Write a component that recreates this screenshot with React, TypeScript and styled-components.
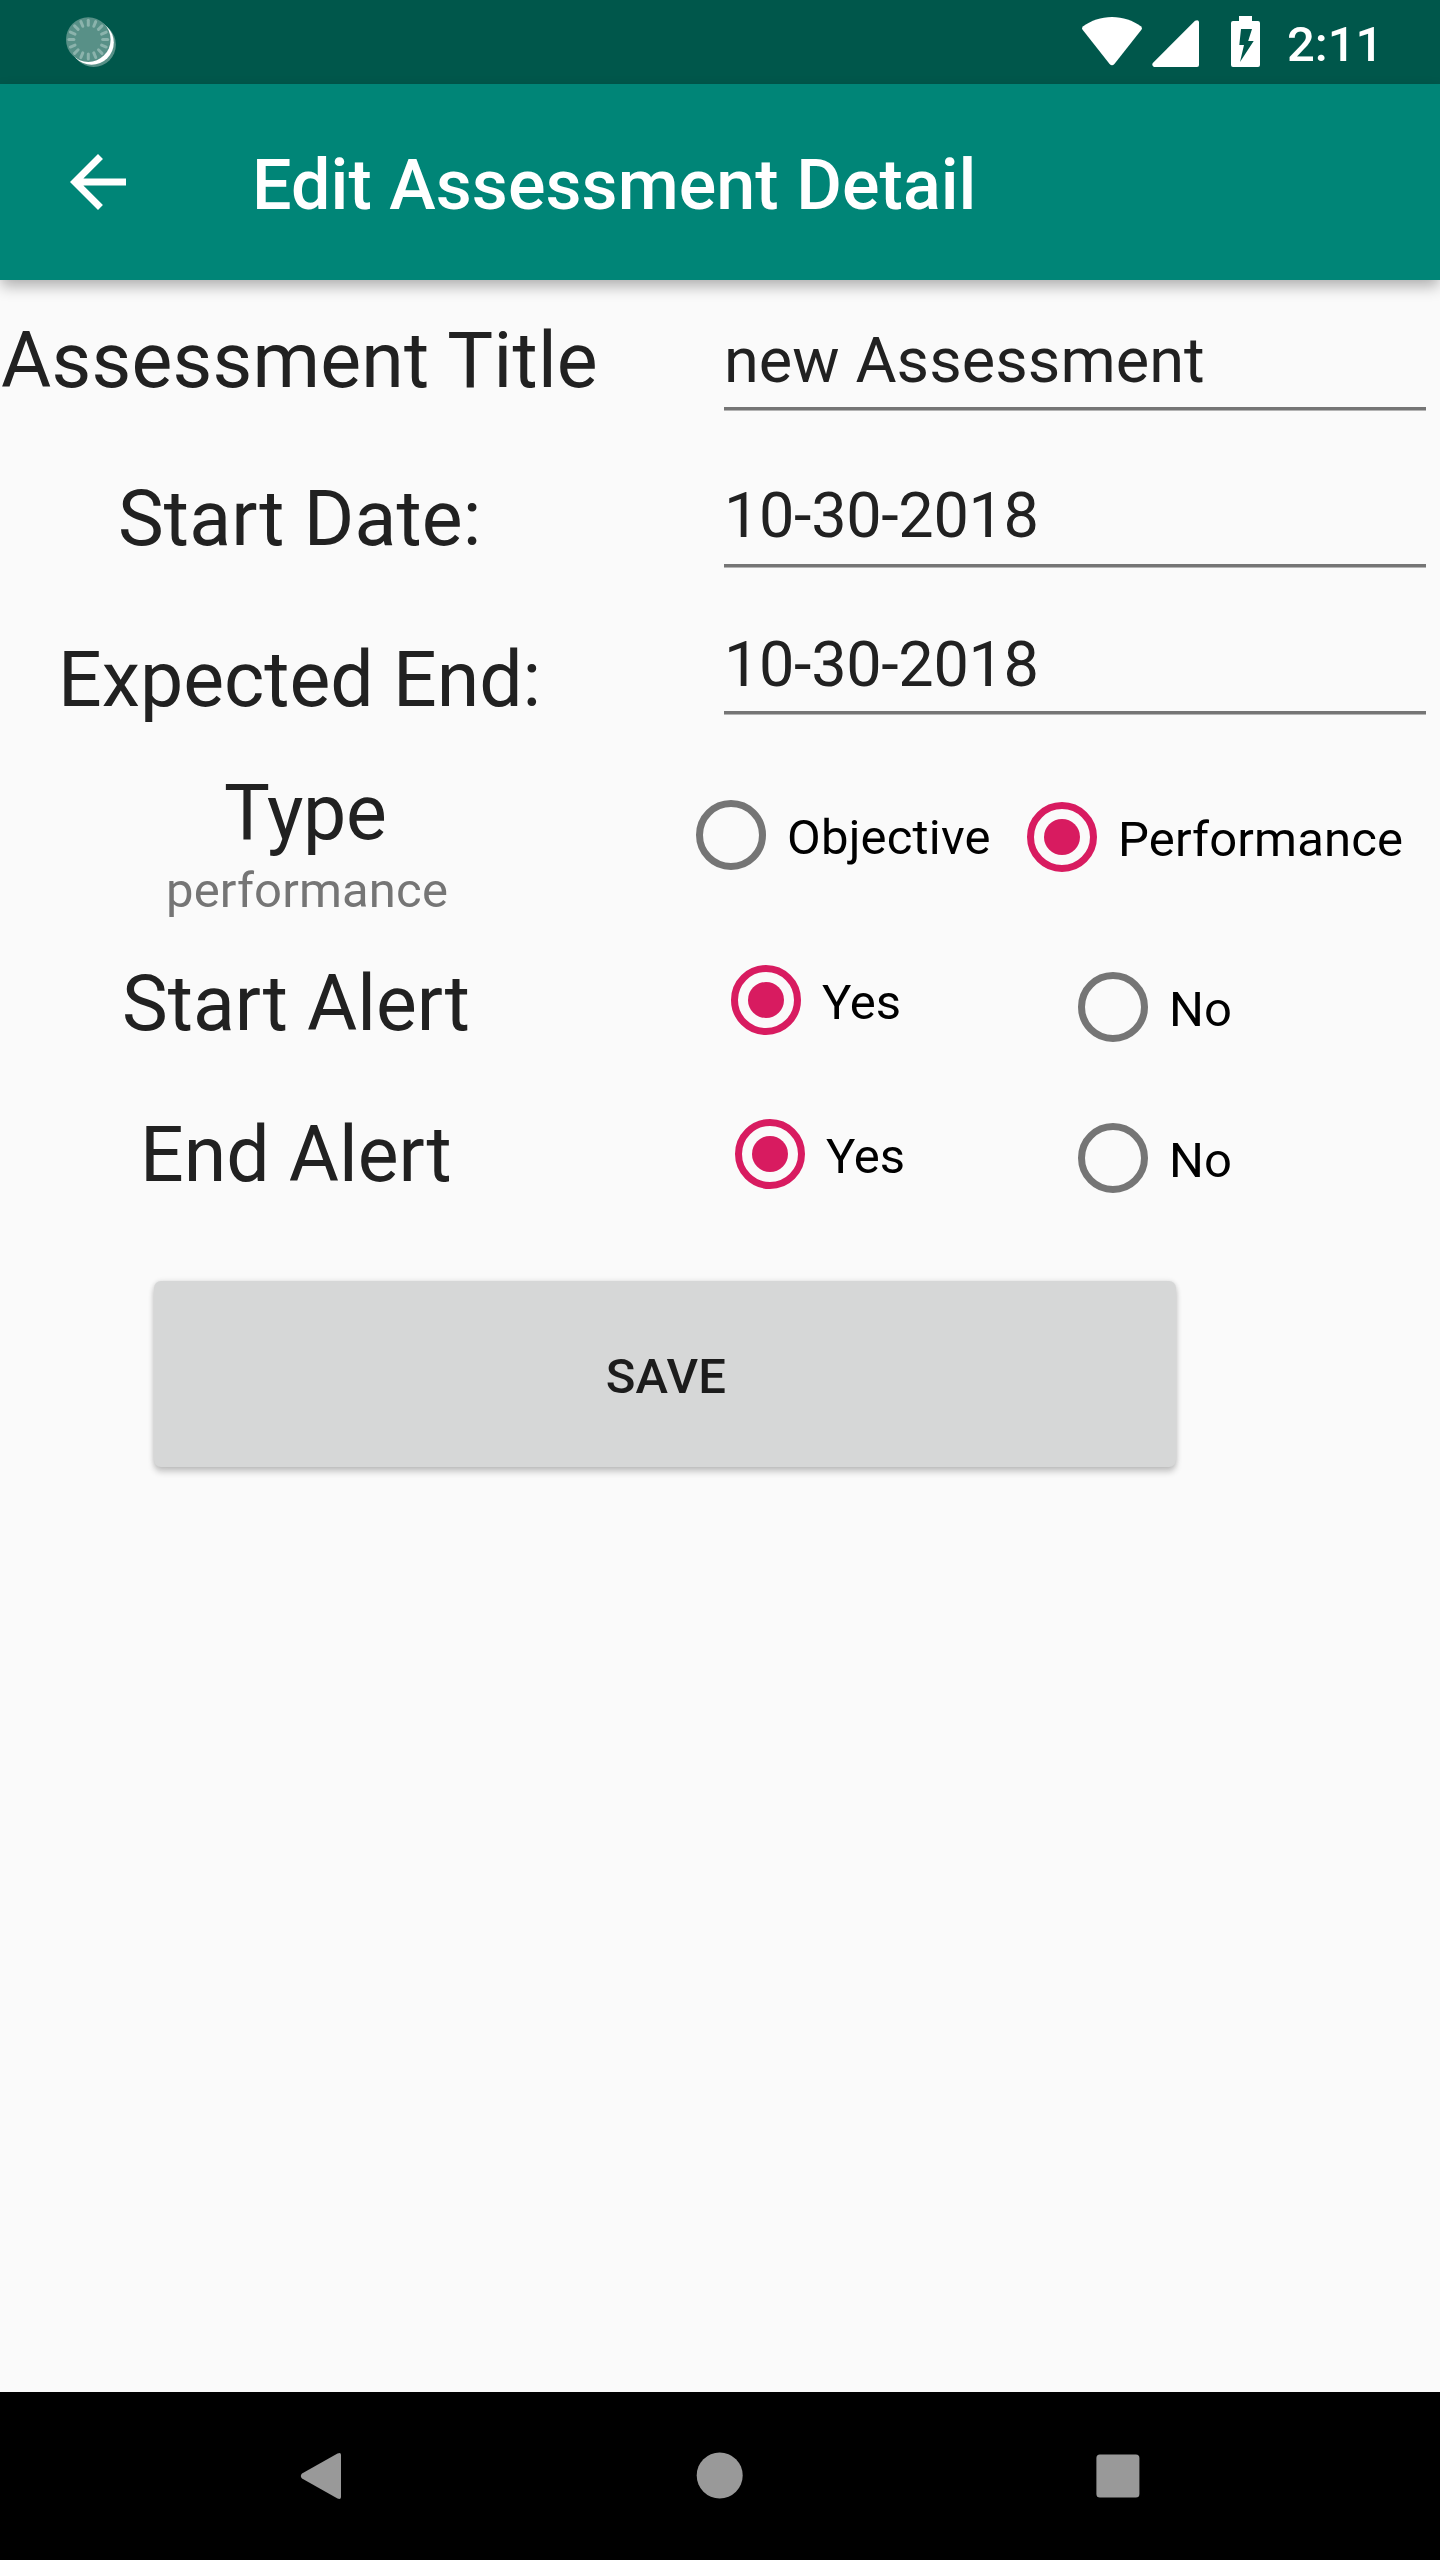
import React, { useState } from "react";
import styled, { createGlobalStyle } from "styled-components";

const GlobalStyle = createGlobalStyle`
  * { box-sizing: border-box; }
  body {
    margin: 0;
    background: #fafafa;
    font-family: Roboto, "Noto Sans", sans-serif;
  }
`;

const Screen = styled.div`
  width: 1440px;
  height: 2560px;
  display: flex;
  flex-direction: column;
  background: #fafafa;
  overflow: hidden;
`;

const StatusBar = styled.header`
  flex: none;
  height: 84px;
  padding: 16px 64px 0 66px;
  display: flex;
  align-items: flex-start;
  background: #00574b;
  color: #fff;
`;

const StatusIcon = styled.svg<{ $left?: number; $top?: number }>`
  flex: none;
  display: block;
  margin-left: ${(p) => p.$left ?? 0}px;
  margin-top: ${(p) => p.$top ?? 0}px;
`;

const StatusSpacer = styled.div`
  flex: 1;
`;

const Clock = styled.time`
  width: 90px;
  margin-left: 26px;
  padding-left: 1px;
  font-size: 49px;
  line-height: 57px;
  font-weight: 500;
  white-space: nowrap;
`;

const AppBar = styled.div`
  flex: none;
  height: 196px;
  padding-left: 56px;
  display: flex;
  align-items: center;
  background: #008577;
  color: #fff;
  box-shadow: 0 7px 14px -1px rgba(0, 0, 0, 0.31);
`;

const BackButton = styled.button`
  width: 84px;
  height: 84px;
  padding: 0;
  border: 0;
  background: none;
  color: inherit;

  svg {
    display: block;
  }
`;

const Heading = styled.h1`
  margin: 6px 0 0 112px;
  font-size: 70px;
  line-height: 82px;
  font-weight: 500;
  letter-spacing: 0.07px;
  white-space: nowrap;
`;

const Form = styled.form`
  flex: 1;
  display: flex;
  flex-direction: column;
`;

const Row = styled.div<{ $height: number }>`
  flex: none;
  height: ${(p) => p.$height}px;
  display: flex;
  align-items: flex-start;
`;

const LabelCell = styled.div<{ $top: number }>`
  flex: none;
  width: 675px;
  padding-top: ${(p) => p.$top}px;
`;

const Label = styled.div<{ $indent: number; $spacing?: number }>`
  margin-left: ${(p) => p.$indent}px;
  font-size: 77px;
  line-height: 90px;
  letter-spacing: ${(p) => p.$spacing ?? 0}px;
  color: #212121;
  white-space: nowrap;
`;

const Caption = styled.div`
  margin: 4px 0 0 166px;
  font-size: 49px;
  line-height: 57px;
  letter-spacing: 0.15px;
  color: #757575;
`;

const Field = styled.div<{ $top: number; $spacing: number }>`
  width: 702px;
  margin: ${(p) => p.$top}px 0 0 49px;
  font-size: 63px;
  line-height: 73px;
  letter-spacing: ${(p) => p.$spacing}px;
  color: #212121;
  white-space: nowrap;
`;

const Underline = styled.div<{ $gap: number }>`
  height: 4px;
  margin-top: ${(p) => p.$gap}px;
  background: linear-gradient(#757575 3px, #b4b4b4 3px);
`;

const Option = styled.label<{ $left: number; $top: number }>`
  display: flex;
  align-items: flex-start;
  flex: none;
  width: 347px;
  margin: ${(p) => p.$top}px 0 0 ${(p) => p.$left}px;
  gap: 21px;
  color: #000;
`;

const Ring = styled.span<{ $checked: boolean }>`
  flex: none;
  width: 70px;
  height: 70px;
  display: grid;
  place-items: center;
  border: 7px solid ${(p) => (p.$checked ? "#d81b60" : "#757575")};
  border-radius: 50%;

  &::after {
    content: "";
    width: 36px;
    height: 36px;
    border-radius: 50%;
    background: ${(p) => (p.$checked ? "#d81b60" : "transparent")};
  }
`;

const OptionText = styled.span<{ $spacing: number }>`
  padding-top: 9px;
  font-size: 49px;
  line-height: 57px;
  letter-spacing: ${(p) => p.$spacing}px;
  white-space: nowrap;
`;

const SaveButton = styled.button`
  flex: none;
  width: 1022px;
  height: 186px;
  margin-left: 154px;
  padding: 4px 0 0 2px;
  border: 0;
  border-radius: 7px;
  background: #d6d7d7;
  color: #1c1c1c;
  font-family: inherit;
  font-size: 49px;
  line-height: 57px;
  font-weight: 500;
  letter-spacing: 0.3px;
  box-shadow: 0 5px 6px rgba(0, 0, 0, 0.2), 0 0 5px rgba(0, 0, 0, 0.12);
`;

const NavBar = styled.nav`
  flex: none;
  height: 168px;
  display: flex;
  align-items: flex-start;
  padding: 60px 300px 0;
  justify-content: space-between;
  background: #000;
`;

const ticks = Array.from({ length: 16 }, (_, i) => i * 22.5);

function Choice(props: {
  text: string;
  left: number;
  top: number;
  spacing?: number;
  checked: boolean;
  onPick: () => void;
}) {
  return (
    <Option $left={props.left} $top={props.top} onClick={props.onPick}>
      <Ring $checked={props.checked} />
      <OptionText $spacing={props.spacing ?? 0}>{props.text}</OptionText>
    </Option>
  );
}

function TextField(props: { value: string; top: number; gap: number; spacing: number }) {
  return (
    <Field $top={props.top} $spacing={props.spacing}>
      {props.value}
      <Underline $gap={props.gap} />
    </Field>
  );
}

export default function App() {
  const [type, setType] = useState("performance");
  const [startAlert, setStartAlert] = useState(true);
  const [endAlert, setEndAlert] = useState(true);

  return (
    <>
      <GlobalStyle />
      <Screen>
        <StatusBar>
          <StatusIcon width="50" height="52" viewBox="66 16 50 52">
            <circle cx="93.7" cy="44.8" r="22.2" fill="#589087" />
            <circle cx="91.6" cy="42.6" r="22.2" fill="#fff" />
            <circle cx="88.3" cy="39.6" r="22.3" fill="#589087" />
            {ticks.map((angle) => (
              <path
                key={angle}
                d="M88.3 20.2v5"
                stroke="#8bb3ac"
                strokeWidth="3"
                strokeLinecap="round"
                transform={`rotate(${angle} 88.3 39.6)`}
              />
            ))}
          </StatusIcon>
          <StatusSpacer />
          <StatusIcon width="60" height="49" viewBox="0 0 60 49" $top={1}>
            <path
              d="M30 0C19 0 9 3.600 1.200 9.200Q-.8 10.800 .8 13L27.600 47Q30 49.600 32.400 47L59.200 13Q60.800 10.800 58.800 9.200C51 3.600 41 0 30 0z"
              fill="#fff"
            />
          </StatusIcon>
          <StatusIcon width="47" height="47" viewBox="0 0 47 47" $left={10} $top={4}>
            <path
              d="M43 .8L.8 43Q-.6 45.600 2 47H45Q47 47 47 45V2Q46.600-.8 43 .8z"
              fill="#fff"
            />
          </StatusIcon>
          <StatusIcon width="29" height="51" viewBox="0 0 29 51" $left={32}>
            <path
              fillRule="evenodd"
              d="M8 0H21V5H27Q29 5 29 7V49Q29 51 27 51H2Q0 51 0 49V7Q0 5 2 5H8zM10 13L8.300 29H13L9 46L22.700 25H17.200L21 13z"
              fill="#fff"
            />
          </StatusIcon>
          <Clock>2:11</Clock>
        </StatusBar>

        <AppBar>
          <BackButton type="button" aria-label="Back">
            <svg width="84" height="84" viewBox="0 0 24 24">
              <path
                d="M20 11H7.830l5.590-5.590L12 4l-8 8 8 8 1.410-1.410L7.830 13H20v-2z"
                fill="currentColor"
              />
            </svg>
          </BackButton>
          <Heading>Edit Assessment Detail</Heading>
        </AppBar>

        <Form>
          <Row $height={145}>
            <LabelCell $top={36}>
              <Label $indent={1} $spacing={0.24}>Assessment Title</Label>
            </LabelCell>
            <TextField value="new Assessment" top={44} gap={10} spacing={0.07} />
          </Row>
          <Row $height={165}>
            <LabelCell $top={49}>
              <Label $indent={118} $spacing={0.12}>Start Date:</Label>
            </LabelCell>
            <TextField value="10-30-2018" top={54} gap={12} spacing={-0.35} />
          </Row>
          <Row $height={170}>
            <LabelCell $top={45}>
              <Label $indent={58}>Expected End:</Label>
            </LabelCell>
            <TextField value="10-30-2018" top={38} gap={10} spacing={-0.35} />
          </Row>
          <Row $height={190}>
            <LabelCell $top={8}>
              <Label $indent={224} $spacing={-0.3}>Type</Label>
              <Caption>{type}</Caption>
            </LabelCell>
            <Choice
              text="Objective"
              left={21}
              top={40}
              spacing={0.2}
              checked={type === "objective"}
              onPick={() => setType("objective")}
            />
            <Choice
              text="Performance"
              left={-16}
              top={42}
              spacing={0.15}
              checked={type === "performance"}
              onPick={() => setType("performance")}
            />
          </Row>
          <Row $height={150}>
            <LabelCell $top={9}>
              <Label $indent={122}>Start Alert</Label>
            </LabelCell>
            <Choice text="Yes" left={56} top={15} checked={startAlert} onPick={() => setStartAlert(true)} />
            <Choice text="No" left={0} top={22} checked={!startAlert} onPick={() => setStartAlert(false)} />
          </Row>
          <Row $height={181}>
            <LabelCell $top={10}>
              <Label $indent={140}>End Alert</Label>
            </LabelCell>
            <Choice text="Yes" left={60} top={19} checked={endAlert} onPick={() => setEndAlert(true)} />
            <Choice text="No" left={-4} top={23} checked={!endAlert} onPick={() => setEndAlert(false)} />
          </Row>
          <SaveButton type="button">SAVE</SaveButton>
        </Form>

        <NavBar>
          <svg width="42" height="48" viewBox="0 0 42 48">
            <path
              d="M37.500 1.600L2 21.600Q-.4 24 2 26.400L37.500 46.600Q41 48 41 45V3Q41 0 37.500 1.600z"
              fill="#999"
            />
          </svg>
          <svg width="48" height="48" viewBox="0 0 48 48">
            <circle cx="24.7" cy="23.4" r="23" fill="#999" />
          </svg>
          <svg width="44" height="48" viewBox="0 0 44 48">
            <rect x=".4" y="2.500" width="43" height="43" rx="3.500" fill="#999" />
          </svg>
        </NavBar>
      </Screen>
    </>
  );
}
